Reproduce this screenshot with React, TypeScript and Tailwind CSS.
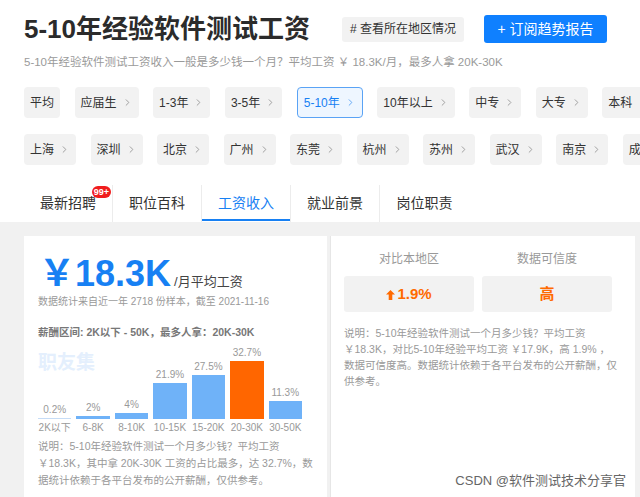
import React from 'react';
import { ChevronRight } from 'lucide-react';

const expFilters = [
  { label: '平均', arrow: false, active: false },
  { label: '应届生', arrow: true, active: false },
  { label: '1-3年', arrow: true, active: false },
  { label: '3-5年', arrow: true, active: false },
  { label: '5-10年', arrow: true, active: true },
  { label: '10年以上', arrow: true, active: false },
  { label: '中专', arrow: true, active: false },
  { label: '大专', arrow: true, active: false },
  { label: '本科', arrow: true, active: false },
];

const cityFilters = ['上海', '深圳', '北京', '广州', '东莞', '杭州', '苏州', '武汉', '南京', '成都'];

const tabs = ['最新招聘', '职位百科', '工资收入', '就业前景', '岗位职责'];

const bars = [
  { range: '2K以下', pct: '0.2%', h: 1, hot: false },
  { range: '6-8K', pct: '2%', h: 3, hot: false },
  { range: '8-10K', pct: '4%', h: 6, hot: false },
  { range: '10-15K', pct: '21.9%', h: 36, hot: false },
  { range: '15-20K', pct: '27.5%', h: 44, hot: false },
  { range: '20-30K', pct: '32.7%', h: 58, hot: true },
  { range: '30-50K', pct: '11.3%', h: 18, hot: false },
];

const Chip: React.FC<{ label: string; arrow: boolean; active?: boolean }> = ({ label, arrow, active }) => (
  <div
    className={`flex shrink-0 items-center h-[31px] rounded-[4px] px-[6px] text-[12px] ${
      active ? 'border border-[#5aa3f5] bg-[#eef6ff] text-[#1780f3]' : 'bg-[#f2f2f2] text-[#333]'
    }`}
  >
    <span className="whitespace-nowrap">{label}</span>
    {arrow && <ChevronRight className={`ml-[5px] w-[11px] h-[11px] ${active ? 'text-[#5aa3f5]' : 'text-[#999]'}`} strokeWidth={2} />}
  </div>
);

export default function App() {
  return (
    <div className="relative w-[640px] h-[497px] overflow-hidden bg-white font-['Liberation_Sans','Noto_Sans_CJK_SC',sans-serif]">
      {/* header */}
      <div className="flex items-center pl-[24px] pt-[14px] h-[44px]">
        <h1 className="text-[26px] leading-[30px] font-bold text-[#2b2b2b] whitespace-nowrap">5-10年经验软件测试工资</h1>
        <div className="ml-[32px] flex items-center h-[25px] px-[8px] rounded-[3px] bg-[#f2f2f2] text-[12px] text-[#333] whitespace-nowrap">
          # 查看所在地区情况
        </div>
        <div className="ml-[20px] flex items-center justify-center w-[123px] h-[28px] rounded-[3px] bg-[#0f80ff] text-[14px] text-white whitespace-nowrap">
          + 订阅趋势报告
        </div>
      </div>

      <p className="mt-[10px] pl-[24px] text-[11.5px] leading-[16px] text-[#9a9a9a] whitespace-nowrap">
        5-10年经验软件测试工资收入一般是多少钱一个月？平均工资 ￥ 18.3K/月，最多人拿 20K-30K
      </p>

      {/* filters */}
      <div className="mt-[17px] flex gap-[14.5px] pl-[24px] overflow-hidden">
        {expFilters.map((f) => (
          <Chip key={f.label} label={f.label} arrow={f.arrow} active={f.active} />
        ))}
      </div>
      <div className="mt-[16px] flex gap-[14.5px] pl-[24px] overflow-hidden">
        {cityFilters.map((c) => (
          <Chip key={c} label={c} arrow />
        ))}
      </div>

      {/* tabs */}
      <div className="mt-[20px] flex h-[37px] pl-[24px]">
        {tabs.map((t, i) => (
          <div
            key={t}
            className={`relative flex w-[89px] items-center justify-center text-[14px] ${
              i === 2 ? 'text-[#1780f3]' : 'text-[#333]'
            } ${i < 4 ? 'border-r border-[#ececec]' : ''}`}
          >
            {t}
            {i === 0 && (
              <span className="absolute left-[68px] top-[1px] flex h-[12px] w-[19px] items-center justify-center rounded-full bg-[#f01d1d] text-[9px] font-bold leading-none text-white">
                99+
              </span>
            )}
            {i === 2 && <span className="absolute bottom-[1px] left-0 right-0 h-[2px] bg-[#1780f3]" />}
          </div>
        ))}
      </div>

      {/* content */}
      <div className="flex gap-[3px] bg-[#f1f1f1] pl-[24px] pr-[5px] pt-[14px] h-[275px]">
        {/* left card */}
        <div className="w-[303px] bg-white pl-[14px] pt-[14px]">
          <div className="flex items-baseline h-[40px]">
            <span className="text-[36px] leading-[40px] font-bold text-[#1780f3] ml-[1px]">
              <span className="font-['Noto_Sans_CJK_SC',sans-serif]">￥</span>18.3K
            </span>
            <span className="ml-[3px] text-[13px] text-[#444]">/月平均工资</span>
          </div>
          <p className="mt-[5px] text-[10px] leading-[14px] text-[#999] whitespace-nowrap">
            数据统计来自近一年 2718 份样本，截至 2021-11-16
          </p>
          <p className="mt-[16px] text-[10.5px] leading-[14px] font-bold text-[#777] whitespace-nowrap">
            薪酬区间: 2K以下 - 50K，最多人拿：20K-30K
          </p>

          <div className="relative w-[264px]">
            <span className="absolute left-0 top-[14px] text-[19px] leading-[20px] font-bold text-[#e4effd]">职友集</span>
            <div className="relative grid grid-cols-7 gap-[5px] h-[80px]">
              {bars.map((b) => (
                <div key={b.range} className="flex flex-col items-center justify-end">
                  <span className="mb-[2px] text-[10px] leading-[12px] text-[#999]">{b.pct}</span>
                  <div
                    className={`w-full ${b.hot ? 'bg-[#ff6600]' : b.h < 2 ? 'bg-[#c6dcf6]' : 'bg-[#6fb2f8]'}`}
                    style={{ height: b.h }}
                  />
                </div>
              ))}
            </div>
            <div className="mt-[3px] grid grid-cols-7 gap-[5px]">
              {bars.map((b) => (
                <span key={b.range} className="text-center text-[10px] leading-[12px] text-[#999] whitespace-nowrap">
                  {b.range}
                </span>
              ))}
            </div>
          </div>

          <div className="mt-[4px] text-[10.5px] leading-[17px] text-[#999] whitespace-nowrap">
            <p>说明：5-10年经验软件测试一个月多少钱？平均工资</p>
            <p>￥18.3K，其中拿 20K-30K 工资的占比最多，达 32.7%，数</p>
            <p>据统计依赖于各平台发布的公开薪酬，仅供参考。</p>
          </div>
        </div>

        {/* right card */}
        <div className="flex-1 bg-white border-l border-[#e6e6e6] pl-[13px] pt-[15px]">
          <div className="flex gap-[8px]">
            <div className="w-[130px]">
              <p className="text-center text-[12px] leading-[16px] text-[#999]">对比本地区</p>
              <div className="mt-[9px] flex h-[36px] items-center justify-center rounded-[3px] bg-[#f2f2f2] text-[15px] font-bold text-[#ff6a00]">
                <svg width="9" height="10" viewBox="0 0 10 11" className="mr-[2px] mt-[2px]">
                  <polygon points="5,0 10,5 7,5 7,11 3,11 3,5 0,5" fill="#ff6a00" />
                </svg>
                1.9%
              </div>
            </div>
            <div className="w-[130px]">
              <p className="text-center text-[12px] leading-[16px] text-[#999]">数据可信度</p>
              <div className="mt-[9px] flex h-[36px] items-center justify-center rounded-[3px] bg-[#f2f2f2] text-[15px] font-bold text-[#ff6a00]">
                高
              </div>
            </div>
          </div>
          <div className="mt-[13px] text-[10.5px] leading-[16px] text-[#999] whitespace-nowrap">
            <p>说明：5-10年经验软件测试一个月多少钱？平均工资</p>
            <p>￥18.3K，对比5-10年经验平均工资 ￥17.9K，高 1.9% ，</p>
            <p>数据可信度高。数据统计依赖于各平台发布的公开薪酬，仅</p>
            <p>供参考。</p>
          </div>
        </div>
      </div>

      <span className="absolute right-[14px] bottom-[7px] text-[13px] leading-[18px] text-[#666] [text-shadow:0_0_2px_#fff]">
        CSDN @软件测试技术分享官
      </span>
    </div>
  );
}
